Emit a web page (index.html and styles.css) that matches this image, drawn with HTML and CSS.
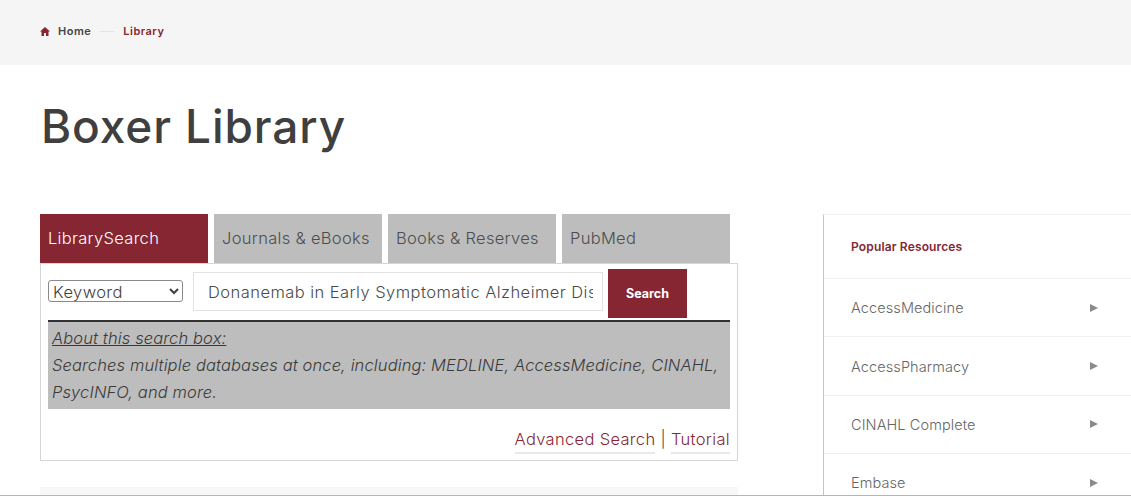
FILE: index.html
```html
<!DOCTYPE html>
<html>
<head>
    <title>Boxer Library</title>
    <meta name="viewport" content="width=device-width, initial-scale=1.0">
    <link rel="stylesheet" href="styles.css">
</head>
<body>
    <nav class="breadcrumb">
        <svg class="home-icon" viewBox="0 0 10 9" width="10" height="9">
            <path d="M5 0 L10 4.6 H8.5 V9 H6 V6 H4 V9 H1.5 V4.6 H0 Z"/>
        </svg>
        <a class="crumb" href="#">Home</a>
        <span class="crumb-line"></span>
        <a class="crumb current" href="#">Library</a>
    </nav>

    <h1 class="page-title">Boxer Library</h1>

    <div class="columns">
        <main class="search-col">
            <div class="tabs">
                <a class="tab active" href="#">LibrarySearch</a>
                <a class="tab" href="#">Journals &amp; eBooks</a>
                <a class="tab" href="#">Books &amp; Reserves</a>
                <a class="tab" href="#">PubMed</a>
            </div>
            <div class="search-box">
                <form class="search-row">
                    <select class="search-type">
                        <option>Keyword</option>
                    </select>
                    <input class="search-input" type="text" value="Donanemab in Early Symptomatic Alzheimer Disease">
                    <button class="search-btn" type="button">Search</button>
                </form>
                <div class="about">
                    <u>About this search box:</u><br>
                    Searches multiple databases at once, including: MEDLINE, AccessMedicine, CINAHL, PsycINFO, and more.
                </div>
                <div class="search-links">
                    <a href="#">Advanced Search</a> <span class="sep">|</span> <a href="#">Tutorial</a>
                </div>
            </div>
            <div class="next-panel"></div>
        </main>

        <aside class="sidebar">
            <h2 class="side-title">Popular Resources</h2>
            <a class="side-item" href="#">AccessMedicine <span class="arrow"></span></a>
            <a class="side-item" href="#">AccessPharmacy <span class="arrow"></span></a>
            <a class="side-item" href="#">CINAHL Complete <span class="arrow"></span></a>
            <a class="side-item" href="#">Embase <span class="arrow"></span></a>
        </aside>
    </div>

    <div class="window-edge"></div>
</body>
</html>
```

FILE: styles.css
```css
html, body {
    height: 100%;
}

body {
    margin: 0;
    background-color: #fff;
    color: #3f3f3f;
    font-family: "Inter", "Liberation Sans", sans-serif;
    overflow: hidden;
    position: relative;
}

/* Thin line along the bottom of the window */
.window-edge {
    position: absolute;
    left: 0;
    right: 0;
    bottom: 0;
    height: 1px;
    background-color: #b8b8a0;
}

/* Breadcrumb bar */
.breadcrumb {
    height: 65px;
    background-color: #f5f5f5;
    display: flex;
    align-items: center;
    padding: 0 0 3px 40px;
    box-sizing: border-box;
    font-size: 11px;
    font-weight: 600;
    letter-spacing: 0.5px;
}

.home-icon {
    fill: #862633;
    margin-right: 8px;
}

.crumb {
    color: #444;
    text-decoration: none;
}

.crumb.current {
    color: #862633;
}

.crumb-line {
    width: 14px;
    height: 1px;
    background-color: #e4e4e4;
    margin: 0 9px;
}

.page-title {
    font-size: 46px;
    font-weight: 500;
    letter-spacing: 0.9px;
    line-height: 58px;
    margin: 32px 0 59px 41px;
    color: #3f3f3f;
}

.columns {
    display: flex;
    align-items: flex-start;
    padding-left: 40px;
}

.search-col {
    width: 698px;
    margin-right: 85px;
    flex-shrink: 0;
}

/* Tabs */
.tabs {
    display: flex;
    gap: 6px;
}

.tab {
    width: 168px;
    height: 49px;
    box-sizing: border-box;
    padding-left: 8px;
    background-color: #bdbdbd;
    color: #4d4d4d;
    font-size: 16.5px;
    font-weight: 300;
    letter-spacing: 0.3px;
    line-height: 48px;
    text-decoration: none;
}

.tab.active {
    background-color: #862633;
    color: #fff;
}

/* Search panel */
.search-box {
    border: 1px solid #d6d6d6;
    padding: 6px 7px 0;
    height: 198px;
    box-sizing: border-box;
}

.search-row {
    display: flex;
    align-items: flex-start;
    height: 50px;
}

.search-type {
    width: 135px;
    height: 22px;
    margin: 10px 10px 0 0;
    padding-left: 0;
    font-family: inherit;
    font-size: 16.5px;
    font-weight: 300;
    letter-spacing: 0.4px;
    color: #3f3f3f;
    background-color: #fff;
    border: 1px solid #8a8a8a;
    border-radius: 3px;
}

.search-input {
    width: 410px;
    height: 39px;
    margin: 2px 5px 0 0;
    padding: 0 9px 0 14px;
    box-sizing: border-box;
    border: 1px solid #e2e2e2;
    font-family: inherit;
    font-size: 16.5px;
    font-weight: 300;
    letter-spacing: 0.45px;
    color: #4a4a4a;
}

.search-btn {
    width: 79px;
    height: 49px;
    margin-top: -1px;
    background-color: #862633;
    border: 0;
    color: #fff;
    font-family: inherit;
    font-size: 12.5px;
    font-weight: 700;
}

.about {
    border-top: 2px solid #333;
    background-color: #bdbdbd;
    height: 89px;
    box-sizing: border-box;
    padding: 3px 0 0 4px;
    font-size: 16.5px;
    font-weight: 300;
    font-style: italic;
    letter-spacing: 0.12px;
    line-height: 27px;
    color: #3a3a3a;
}

.search-links {
    text-align: right;
    font-size: 16.5px;
    font-weight: 300;
    letter-spacing: 0.33px;
    margin-top: 20px;
    color: #3f3f3f;
}

.search-links a {
    color: #862633;
    text-decoration: none;
    border-bottom: 2px solid #e8e8e8;
    padding-bottom: 3px;
}

.next-panel {
    margin-top: 26px;
    height: 60px;
    background-color: #f7f7f7;
}

/* Sidebar */
.sidebar {
    width: 308px;
    flex-shrink: 0;
    border-left: 1px solid #c4c4c4;
    border-right: 1px solid #efefef;
    border-top: 1px solid #efefef;
}

.side-title {
    margin: 0;
    height: 63px;
    padding-left: 27px;
    font-size: 12px;
    font-weight: 600;
    letter-spacing: 0.15px;
    line-height: 64px;
    color: #862633;
}

.side-item {
    display: flex;
    justify-content: space-between;
    align-items: center;
    height: 58.4px;
    border-top: 1px solid #efefef;
    box-sizing: border-box;
    padding: 0 34px 0 27px;
    color: #666;
    font-size: 14.5px;
    font-weight: 300;
    letter-spacing: 0.1px;
    text-decoration: none;
}

.arrow {
    width: 0;
    height: 0;
    border-left: 8px solid #8a8a8a;
    border-top: 4px solid transparent;
    border-bottom: 4px solid transparent;
}
```
